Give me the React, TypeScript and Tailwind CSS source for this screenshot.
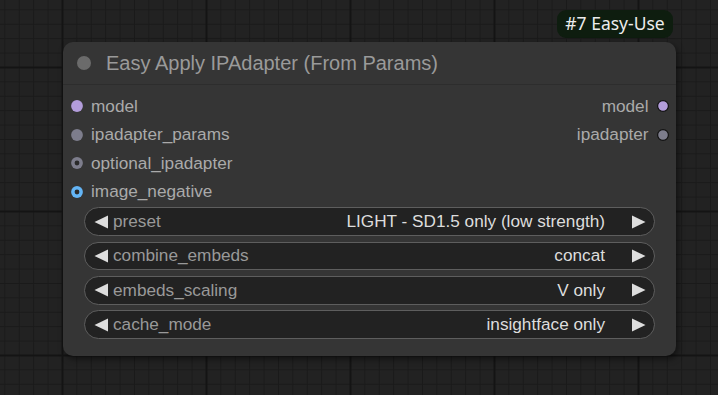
import React from "react";

function Grid() {
  return (
    <svg className="absolute inset-0" width="718" height="395">
      <defs>
        <pattern id="minor" x="4.4" y="9.4" width="14.4" height="14.4" patternUnits="userSpaceOnUse">
          <rect x="0" y="0" width="1" height="14.4" fill="#1a1a1a" />
          <rect x="0" y="0" width="14.4" height="1" fill="#1a1a1a" />
        </pattern>
        <pattern id="major" x="61.5" y="66.5" width="144" height="144" patternUnits="userSpaceOnUse">
          <rect x="0" y="0" width="2" height="144" fill="#141414" />
          <rect x="0" y="0" width="144" height="2" fill="#141414" />
        </pattern>
      </defs>
      <rect width="718" height="395" fill="#222222" />
      <rect width="718" height="395" fill="url(#minor)" />
      <rect width="718" height="395" fill="url(#major)" />
    </svg>
  );
}

function Dot({ color, hollow, outline }: { color: string; hollow?: boolean; outline?: boolean }) {
  return (
    <svg width="12" height="12" viewBox="0 0 12 12" className="shrink-0">
      <circle cx="6" cy="6" r={outline ? 5.4 : 5.9} fill={color} stroke={outline ? "#111" : "none"} strokeWidth={outline ? 1.2 : 0} />
      {hollow && <circle cx="6" cy="6" r="2.4" fill="#2a2a2a" />}
    </svg>
  );
}

function LeftArrow() {
  return (
    <svg width="14" height="14" viewBox="0 0 14 14" className="shrink-0">
      <polygon points="14,0.5 14,13.5 0.5,7" fill="#dddddd" />
    </svg>
  );
}

function RightArrow() {
  return (
    <svg width="14" height="14" viewBox="0 0 14 14" className="shrink-0">
      <polygon points="0,0.5 0,13.5 13.5,7" fill="#dddddd" />
    </svg>
  );
}

const inputs = [
  { name: "model", color: "#b39ddb" },
  { name: "ipadapter_params", color: "#7d7d8c" },
  { name: "optional_ipadapter", color: "#7d7d8c", hollow: true },
  { name: "image_negative", color: "#64b5f6", hollow: true },
];

const outputs = [
  { name: "model", color: "#b39ddb" },
  { name: "ipadapter", color: "#7d7d8c" },
];

const widgets = [
  { label: "preset", value: "LIGHT - SD1.5 only (low strength)" },
  { label: "combine_embeds", value: "concat" },
  { label: "embeds_scaling", value: "V only" },
  { label: "cache_mode", value: "insightface only" },
];

export default function App() {
  return (
    <div
      className="relative w-[718px] h-[395px] overflow-hidden bg-[#222222]"
      style={{ fontFamily: '"Liberation Sans", Arial, sans-serif' }}
    >
      <Grid />

      <div className="absolute left-[557px] top-[10px] h-[28px] w-[116px] rounded-[9px] bg-[#0e1d0f] flex items-center justify-center">
        <span
          className="text-[17.5px] text-[#ececec] leading-none"
          style={{ fontFamily: '"Noto Sans", "Open Sans", sans-serif' }}
        >
          #7 Easy-Use
        </span>
      </div>

      <div className="absolute left-[63px] top-[42px] w-[613px] h-[314px] rounded-[10px] bg-[#353535] shadow-[2px_3px_6px_rgba(0,0,0,0.5)] flex flex-col">
        <div className="h-[43px] flex items-center pl-[14px] border-b border-[#2d2d2d] shrink-0">
          <div className="w-[14px] h-[14px] rounded-full bg-[#6b6b6b]" />
          <span className="ml-[15px] text-[20px] text-[#9a9a9a] leading-none">Easy Apply IPAdapter (From Params)</span>
        </div>

        <div className="flex pt-[7px]">
          <div className="flex flex-col flex-1">
            {inputs.map((s) => (
              <div key={s.name} className="h-[28.6px] flex items-center pl-[8px]">
                <Dot color={s.color} hollow={s.hollow} />
                <span className="ml-[8px] text-[17.2px] text-[#aaaaaa] leading-none">{s.name}</span>
              </div>
            ))}
          </div>
          <div className="flex flex-col items-end">
            {outputs.map((s) => (
              <div key={s.name} className="h-[28.6px] flex items-center pr-[7px]">
                <span className="mr-[8.5px] text-[17.2px] text-[#aaaaaa] leading-none">{s.name}</span>
                <Dot color={s.color} outline />
              </div>
            ))}
          </div>
        </div>

        <div className="flex flex-col gap-[5.7px] px-[21px] pt-[1px]">
          {widgets.map((w) => (
            <div
              key={w.label}
              className="h-[28.6px] rounded-full bg-[#222222] border border-[#5e5e5e] flex items-center pl-[8.5px] pr-[8px]"
            >
              <LeftArrow />
              <span className="ml-[5.5px] text-[17.2px] text-[#999999] leading-none">{w.label}</span>
              <span className="ml-auto text-[17.2px] text-[#dddddd] leading-none">{w.value}</span>
              <span className="ml-[27px] flex">
                <RightArrow />
              </span>
            </div>
          ))}
        </div>
      </div>
    </div>
  );
}
